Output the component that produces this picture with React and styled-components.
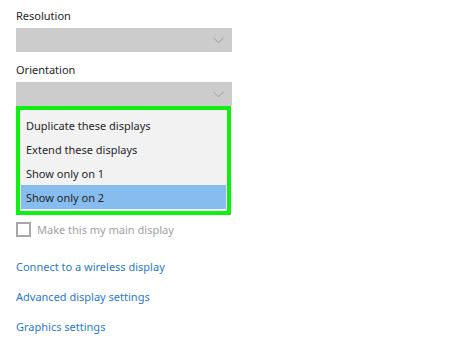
import React from "react";
import styled, { createGlobalStyle } from "styled-components";

const Global = createGlobalStyle`
  html, body { margin: 0; padding: 0; background: #ffffff; }
  body { font-family: "Noto Sans", "Open Sans", sans-serif; }
`;

const Page = styled.div`
  width: 469px;
  height: 343px;
  box-sizing: border-box;
  padding: 9px 0 0 16px;
  background: #fff;
  display: flex;
  flex-direction: column;
`;

const Label = styled.div`
  font-size: 11px;
  line-height: 14px;
  color: #262626;
  margin-bottom: ${(p) => p.$mb || 5}px;
`;

const Select = styled.div`
  width: 216px;
  height: 24px;
  background: #cccccc;
  display: flex;
  align-items: center;
  justify-content: flex-end;
  padding-right: 8px;
  box-sizing: border-box;
  margin-bottom: ${(p) => p.$mb || 0}px;
`;

const Chevron = () => (
  <svg width="11" height="7" viewBox="0 0 11 7">
    <path d="M0.5 0.8 L5.5 5.8 L10.5 0.8" fill="none" stroke="#9a9a9a" strokeWidth="1" />
  </svg>
);

const Menu = styled.div`
  width: 215px;
  box-sizing: border-box;
  border: 4px solid #12ee12;
  background: #f2f2f2;
  padding: 3px 0 2px;
  display: flex;
  flex-direction: column;
`;

const Item = styled.div`
  height: 24px;
  display: flex;
  align-items: center;
  padding-left: 5px;
  margin: 0 1px;
  font-size: 11px;
  color: #262626;
  background: ${(p) => (p.$selected ? "#86bdee" : "transparent")};
`;

const CheckRow = styled.div`
  display: flex;
  align-items: center;
  gap: 6px;
  margin-top: 7px;
  margin-bottom: 21px;
`;

const Box = styled.div`
  width: 15px;
  height: 15px;
  box-sizing: border-box;
  border: 2px solid #a8a8a8;
`;

const CheckLabel = styled.span`
  font-size: 11px;
  color: #a0a0a0;
`;

const Links = styled.div`
  display: flex;
  flex-direction: column;
  gap: 13px;
`;

const Link = styled.a`
  font-size: 11px;
  line-height: 17px;
  color: #1f7ad0;
  text-decoration: none;
`;

export default function App() {
  return (
    <>
      <Global />
      <Page>
        <Label>Resolution</Label>
        <Select $mb={11}><Chevron /></Select>
        <Label>Orientation</Label>
        <Select><Chevron /></Select>
        <Menu>
          <Item>Duplicate these displays</Item>
          <Item>Extend these displays</Item>
          <Item>Show only on 1</Item>
          <Item $selected>Show only on 2</Item>
        </Menu>
        <CheckRow>
          <Box />
          <CheckLabel>Make this my main display</CheckLabel>
        </CheckRow>
        <Links>
          <Link>Connect to a wireless display</Link>
          <Link>Advanced display settings</Link>
          <Link>Graphics settings</Link>
        </Links>
      </Page>
    </>
  );
}
